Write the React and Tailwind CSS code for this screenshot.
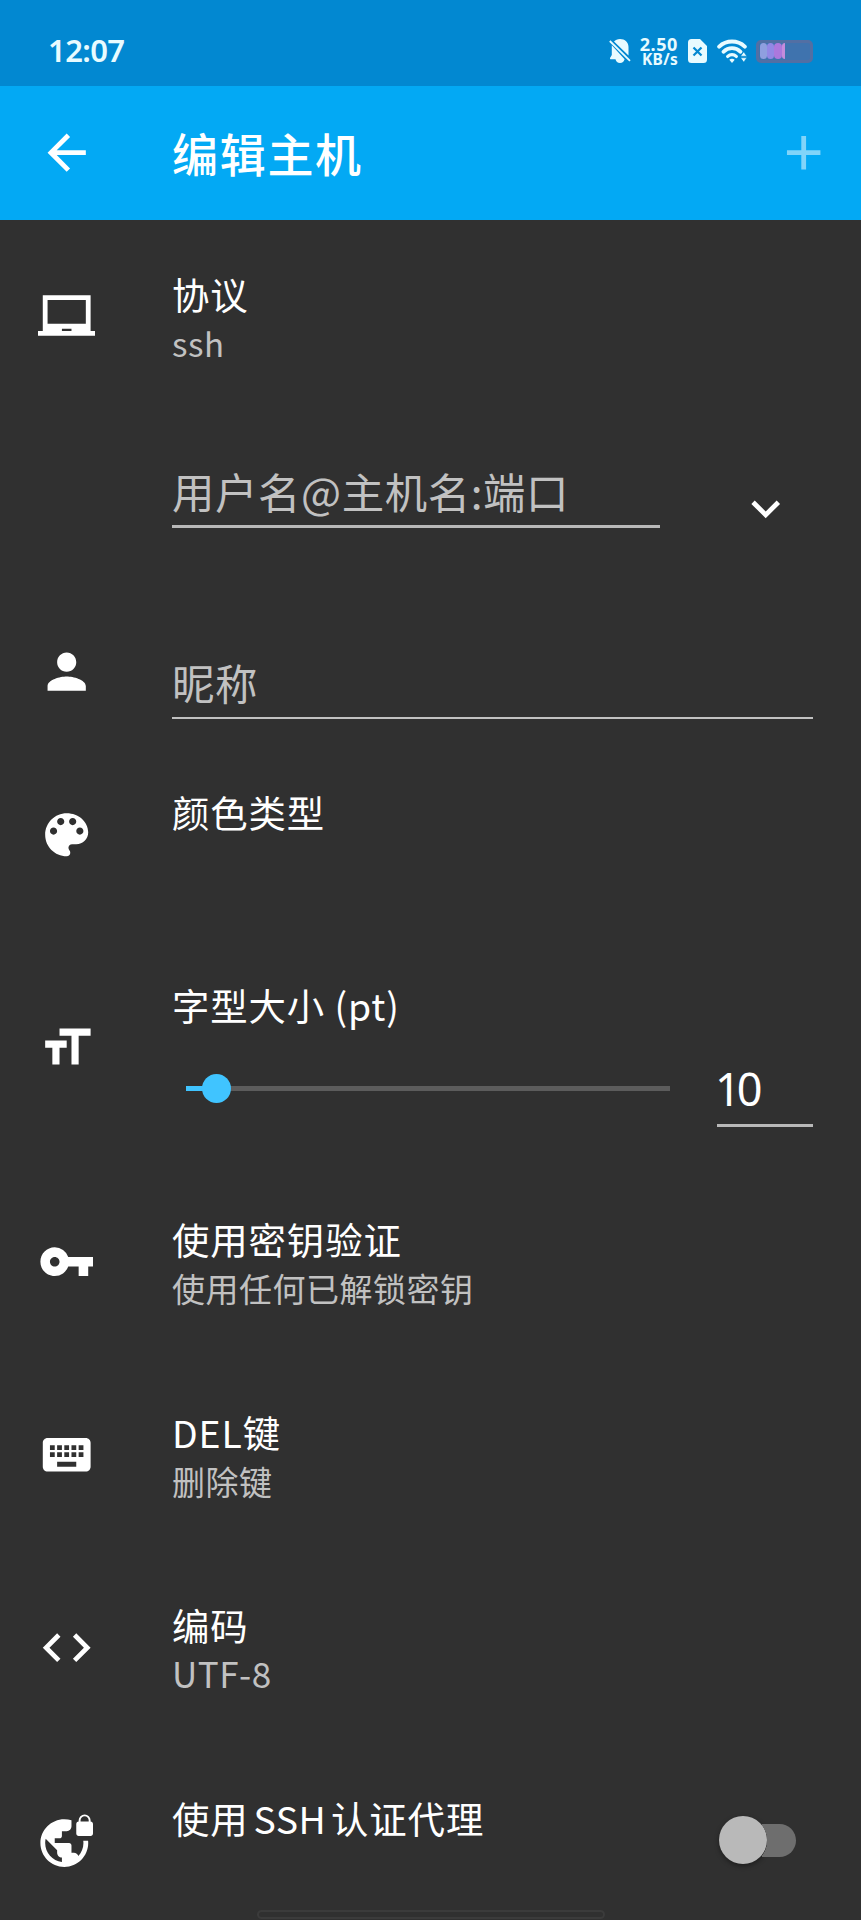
import { useState } from "react";
import {
  MdAdd,
  MdArrowBack,
  MdCode,
  MdExpandMore,
  MdFormatSize,
  MdKeyboard,
  MdLaptopChromebook,
  MdPerson,
  MdVpnKey,
  MdVpnLock,
} from "react-icons/md";

const MIN_SIZE = 8;
const MAX_SIZE = 40;

function PaletteIcon({ className }) {
  return (
    <svg className={className} viewBox="0 0 24 24" fill="currentColor">
      <path d="M12 3c-4.970 0-9 4.030-9 9s4.030 9 9 9c.83 0 1.500-.67 1.500-1.500 0-.39-.15-.74-.39-1.010-.23-.26-.38-.61-.38-.99 0-.83.67-1.500 1.500-1.500H16c2.760 0 5-2.240 5-5 0-4.420-4.030-8-9-8zm-5.500 9c-.83 0-1.500-.67-1.500-1.500S5.670 9 6.500 9 8 9.670 8 10.500 7.330 12 6.500 12zm3-4C8.670 8 8 7.330 8 6.500S8.670 5 9.500 5s1.500.67 1.500 1.500S10.330 8 9.500 8zm5 0c-.83 0-1.500-.67-1.500-1.500S13.670 5 14.500 5s1.500.67 1.500 1.500S15.330 8 14.500 8zm3 4c-.83 0-1.500-.67-1.500-1.500S16.670 9 17.500 9s1.500.67 1.500 1.500-.67 1.500-1.500 1.500z" />
    </svg>
  );
}

function StatusBar() {
  return (
    <div className="flex h-[86px] items-center bg-[#0288d1] pl-12 pr-12 pt-4 font-['Noto_Sans',sans-serif] text-[#e8fbff]">
      <span className="-mt-px text-[31px] font-semibold leading-none tracking-[-0.6px]">12:07</span>
      <div className="ml-auto flex items-center">
        <svg className="h-6 w-[22px]" viewBox="0 0 22 24" fill="currentColor">
          <path d="M5 2.600C6.500 1 8.300 0 11 0c5 0 8.500 3.400 8.500 8v8.500zM2.800 6.200 15.600 20.300C15 22.500 13.500 24 11 24s-4-1.500-4.500-3.700H2c-1 0-1.300-1-.7-1.800l1.500-2.500z" />
          <path d="M.8 2 21 21.800" stroke="currentColor" strokeWidth="1.800" fill="none" />
        </svg>
        <div className="ml-2 flex w-[39px] flex-col items-end font-bold">
          <span className="text-[18px] leading-[16px] tracking-[0.6px]">2.50</span>
          <span className="text-[15.5px] leading-[15px] tracking-[0.3px]">KB/s</span>
        </div>
        <svg className="ml-[10px] h-6 w-[19px]" viewBox="0 0 19 24" fill="currentColor">
          <path d="M3.500 0H12l7 7v13.500a3.500 3.500 0 0 1-3.500 3.500h-12A3.500 3.500 0 0 1 0 20.500v-17A3.500 3.500 0 0 1 3.500 0z" />
          <path d="m5.500 8.500 8 8m0-8-8 8" stroke="#0288d1" strokeWidth="2.200" />
        </svg>
        <svg className="ml-[10px] h-6 w-[30px]" viewBox="0 0 30 24" fill="none" stroke="currentColor" strokeLinecap="round">
          <path d="M2.200 7.600C9.500.9 20.500.9 27.800 7.600" strokeWidth="4" />
          <path d="M6.400 12.800c5-4.800 12.200-4.800 17.200 0" strokeWidth="3.700" />
          <path d="M10.700 17.400c2.500-2.300 6.100-2.300 8.600 0" strokeWidth="3.300" />
          <path d="M12.300 20.800c1.500-1.500 3.900-1.500 5.400 0L15 24z" fill="currentColor" stroke="none" />
          <path d="M26.800 13l3 4.200h-6zM26.800 23l3-4.200h-6z" fill="currentColor" stroke="#0288d1" strokeWidth="0.500" />
        </svg>
        <div className="ml-[9px] flex h-[23px] w-[57px] items-center rounded-[5px] border-[3px] border-[#526fa4] bg-[#3f73ae] px-px">
          <span className="h-[16px] w-[7px] rounded-full bg-[#8f9fdf]" />
          <span className="h-[16px] w-[7px] rounded-full bg-[#9288e5]" />
          <span className="h-[16px] w-[8px] rounded-full bg-[#ac78dd]" />
          <span className="h-[16px] w-[3px] rounded-l-full bg-[#c48cdc]" />
        </div>
      </div>
    </div>
  );
}

function AppBar() {
  return (
    <header className="flex h-[134px] items-center bg-[#03a9f4] text-white">
      <div className="w-[172px] pl-[38px]">
        <MdArrowBack className="size-[57.4px]" />
      </div>
      <h1 className="-mt-0.5 text-[46px] font-medium leading-none tracking-[1.7px]">编辑主机</h1>
      <MdAdd className="ml-auto mr-[29px] size-[57.4px] opacity-50" />
    </header>
  );
}

function Row({ icon: Icon, title, subtitle, className = "h-[193px]", children }) {
  return (
    <section className={`flex ${className}`}>
      <div className="w-[172px] shrink-0 pl-[38px] pt-[68px]">
        <Icon className="size-[57.4px]" />
      </div>
      <div className="flex-1 pt-[49.5px]">
        <h2 className="text-[37.4px] leading-[49px] tracking-[0.9px]">{title}</h2>
        {subtitle && (
          <p className="text-[33px] leading-[49px] tracking-[0.5px] text-[#c1c1c1]">{subtitle}</p>
        )}
      </div>
      {children}
    </section>
  );
}

export default function App() {
  const [size] = useState(10);
  const [agent, setAgent] = useState(false);
  const percent = ((size - MIN_SIZE) / (MAX_SIZE - MIN_SIZE)) * 100;

  return (
    <div className="relative h-[1920px] w-[861px] overflow-hidden bg-[#303030] font-['Noto_Sans_CJK_SC',sans-serif] text-white">
      <StatusBar />
      <AppBar />
      <main>
        <Row icon={MdLaptopChromebook} title="协议" subtitle="ssh" />

        <section className="flex h-[191px] pl-[172px]">
          <div className="h-[115px] w-[488px] border-b-[3px] border-[#b8b8b8] pt-12 text-[42.4px] leading-[60px] tracking-[0.6px] text-[#c1c1c1]">
            用户名@主机名:端口
          </div>
          <MdExpandMore className="ml-[77px] mt-[67px] size-[57.4px]" />
        </section>

        <section className="flex h-[134px]">
          <div className="w-[172px] shrink-0 pl-[38px] pt-[39px]">
            <MdPerson className="size-[57.4px]" />
          </div>
          <div className="h-[115px] w-[641px] border-b-2 border-[#c1c1c1] pt-12 text-[42.4px] leading-[60px] tracking-[0.6px] text-[#c1c1c1]">
            昵称
          </div>
        </section>

        <Row icon={PaletteIcon} title="颜色类型" />

        <section className="flex h-[234px]">
          <div className="w-[172px] shrink-0 pl-[38px] pt-[88px]">
            <MdFormatSize className="size-[57.4px]" />
          </div>
          <div className="w-[641px] pt-[50px]">
            <h2 className="text-[37.4px] leading-[49px] tracking-[0.9px]">字型大小 (pt)</h2>
            <div className="flex justify-between">
              <div className="ml-[14px] mt-14 h-[5px] w-[484px] bg-[#5c5c5c]">
                <div className="relative h-full bg-[#40c4ff]" style={{ width: `${percent}%` }}>
                  <span className="absolute -right-[14.5px] -top-3 size-[29px] rounded-full bg-[#40c4ff]" />
                </div>
              </div>
              <div className="h-[97px] w-24 border-b-[3px] border-[#b8b8b8] pt-[29px] font-['Noto_Sans',sans-serif] text-[45px] leading-[60px] tracking-[-4px]">
                <span className="-ml-0.5">{size}</span>
              </div>
            </div>
          </div>
        </section>

        <Row icon={MdVpnKey} title="使用密钥验证" subtitle="使用任何已解锁密钥" />
        <Row icon={MdKeyboard} title="DEL键" subtitle="删除键" />
        <Row
          icon={MdCode}
          title="编码"
          subtitle={<span className="block text-[35px] leading-[46px] tracking-[0.5px]">UTF-8</span>}
        />
        <Row
          icon={MdVpnLock}
          title={
            <>
              使用<span className="mx-[5px] tracking-[0.4px]">SSH</span>认证代理
            </>
          }
          className="h-[176px]"
        >
          <button
            role="switch"
            aria-checked={agent}
            onClick={() => setAgent(!agent)}
            className="mr-[65px] mt-[72px] flex h-12 w-[77px] items-center"
          >
            <span className="size-12 shrink-0 rounded-full bg-[#b9b9b9] shadow-[0_2px_5px_rgba(0,0,0,0.4)]" />
            {/* only the part of the track right of the thumb is filled */}
            <span className="-ml-[5px] -mr-px h-[33px] w-[34px] shrink-0 rounded-r-full bg-[radial-gradient(circle_at_-19px_50%,transparent_24px,#6e6e6e_24.5px)]" />
          </button>
        </Row>
      </main>

      {/* gesture bar */}
      <div className="absolute bottom-[1px] left-[257px] h-[9px] w-[348px] rounded-full border-2 border-[#3b3b3b]" />
    </div>
  );
}
